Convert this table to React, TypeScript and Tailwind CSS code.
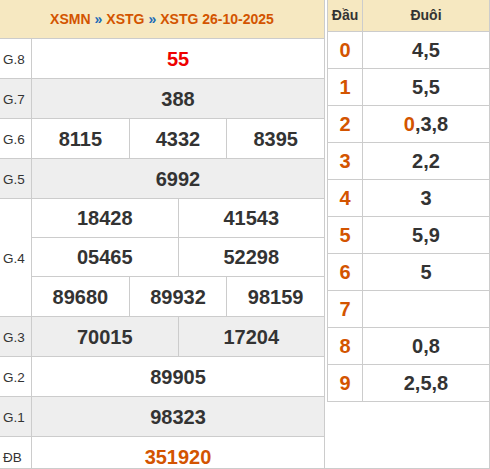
import React from "react";

const F = { fontFamily: '"Liberation Sans", Arial, sans-serif' };

function Row({ label, gray, children, last }: { label: string; gray?: boolean; children: React.ReactNode; last?: boolean }) {
  return (
    <div className={`flex ${last ? "" : "border-b"} border-[#ccc] ${gray ? "bg-[#eeeeee]" : "bg-white"}`}>
      <div className="w-[32px] shrink-0 border-r border-[#ccc] flex items-center pl-[3px] pt-[3px] text-[13.5px] text-[#333]">
        {label}
      </div>
      <div className="flex-1 flex flex-col">{children}</div>
    </div>
  );
}

function Cells({ values, cls = "text-[#333]", divider }: { values: string[]; cls?: string; divider?: boolean }) {
  return (
    <div className={`flex h-[39px] ${divider ? "border-b border-[#ccc]" : ""}`}>
      {values.map((v, i) => (
        <div
          key={i}
          className={`flex-1 flex items-center justify-center text-[20px] font-bold ${cls} ${i < values.length - 1 ? "border-r border-[#ccc]" : ""}`}
        >
          {v}
        </div>
      ))}
    </div>
  );
}

const loto: [string, React.ReactNode][] = [
  ["0", "4,5"],
  ["1", "5,5"],
  ["2", <><span className="text-[#d35400]">0</span>,3,8</>],
  ["3", "2,2"],
  ["4", "3"],
  ["5", "5,9"],
  ["6", "5"],
  ["7", ""],
  ["8", "0,8"],
  ["9", "2,5,8"],
];

export default function App() {
  return (
    <div style={F} className="w-[490px] h-[469px] flex border-r border-b border-[#ccc] overflow-hidden bg-white">
      <div className="w-[325px] shrink-0 border-r border-[#ccc] flex flex-col">
        <div className="h-[39px] shrink-0 border-b border-[#ccc] bg-[#f6e8c1] flex items-center justify-center text-[14px] font-bold text-[#d35400]">
          <span>XSMN</span>
          <span className="text-[#1a6ab8] mx-[4px]">»</span>
          <span>XSTG</span>
          <span className="text-[#1a6ab8] mx-[4px]">»</span>
          <span>XSTG 26-10-2025</span>
        </div>
        <Row label="G.8"><Cells values={["55"]} cls="text-[#ee0000]" /></Row>
        <Row label="G.7" gray><Cells values={["388"]} /></Row>
        <Row label="G.6"><Cells values={["8115", "4332", "8395"]} /></Row>
        <Row label="G.5" gray><Cells values={["6992"]} /></Row>
        <Row label="G.4">
          <Cells values={["18428", "41543"]} divider />
          <Cells values={["05465", "52298"]} divider />
          <Cells values={["89680", "89932", "98159"]} />
        </Row>
        <Row label="G.3" gray><Cells values={["70015", "17204"]} /></Row>
        <Row label="G.2"><Cells values={["89905"]} /></Row>
        <Row label="G.1" gray><Cells values={["98323"]} /></Row>
        <Row label="ĐB" last><Cells values={["351920"]} cls="text-[#d35400]" /></Row>
      </div>
      <div className="flex-1 pl-[2px]">
        <div className="border-l border-[#ccc]">
          <div className="flex h-[32px] border-b border-[#ccc] bg-[#f6e8c1] text-[14px] font-bold text-[#333]">
            <div className="w-[35px] shrink-0 border-r border-[#ccc] flex items-center justify-center">Đầu</div>
            <div className="flex-1 flex items-center justify-center">Đuôi</div>
          </div>
          {loto.map(([d, t]) => (
            <div key={d} className="flex h-[37px] border-b border-[#ccc] text-[20px] font-bold">
              <div className="w-[35px] shrink-0 border-r border-[#ccc] flex items-center justify-center text-[#d35400]">{d}</div>
              <div className="flex-1 flex items-center justify-center text-[#333]">{t}</div>
            </div>
          ))}
        </div>
      </div>
    </div>
  );
}
